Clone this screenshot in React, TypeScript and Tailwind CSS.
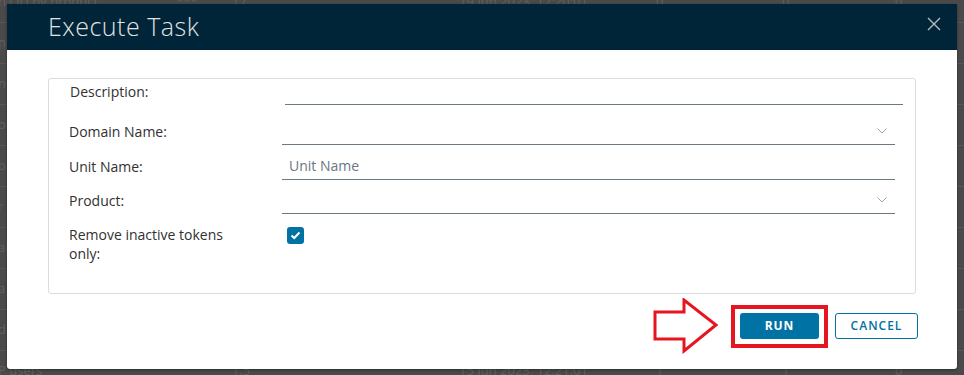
import React from "react";

function Backdrop() {
  const mids = ["n", "n", "of", "o", "r", "ai", "a", "d"];
  const rows = Array.from({ length: 10 });
  return (
    <div className="absolute inset-0 bg-[#4a4a4a] overflow-hidden">
      <div className="flex flex-col -mt-[18px]">
        {rows.map((_, i) => {
          const first = i === 0;
          const last = i === rows.length - 1;
          let cells: string[];
          if (first) cells = ["n OU by product", "***", "17", "19 Jun 2023, 12:20:01", "0", "0", "0"];
          else if (last) cells = ["P users", "", "1.5", "15 Jun 2023, 12:21:01", "1", "1", "0"];
          else cells = [mids[i - 1], "", "", "", "", "", ""];
          return (
            <div
              key={i}
              className="h-[41px] border-b border-[#575757] flex items-center text-[13px] text-[#606060] whitespace-nowrap"
            >
              <span className="w-[178px] -ml-[2px] pl-0">{cells[0]}</span>
              <span className="w-[56px]">{cells[1]}</span>
              <span className="w-[227px]">{cells[2]}</span>
              <span className="w-[197px]">{cells[3]}</span>
              <span className="w-[126px]">{cells[4]}</span>
              <span className="w-[113px]">{cells[5]}</span>
              <span>{cells[6]}</span>
            </div>
          );
        })}
      </div>
    </div>
  );
}

function Chevron() {
  return (
    <svg width="10" height="6" viewBox="0 0 10 6" fill="none">
      <path d="M0.5 0.5 L5 5 L9.5 0.5" stroke="#a3a3a3" strokeWidth="1" />
    </svg>
  );
}

function Row({
  label,
  h,
  children,
}: {
  label: string;
  h: string;
  children?: React.ReactNode;
}) {
  return (
    <div className="flex items-end">
      <div className="w-[233px] shrink-0 pl-[20px] pb-[3px] leading-[20px] text-[14px] font-medium text-[#313131]">
        {label}
      </div>
      <div className={`flex-1 ${h} border-b border-[#6b7a82] flex items-end justify-between pr-[8px]`}>
        {children}
      </div>
    </div>
  );
}

export default function App() {
  return (
    <div className="relative w-[964px] h-[375px] overflow-hidden font-['Open_Sans',sans-serif]">
      <Backdrop />
      <div className="absolute left-[7px] top-[4px] w-[950px] h-[365px] bg-white rounded-b-[3px] shadow-[0_1px_3px_rgba(0,0,0,0.4)] flex flex-col">
        <div className="h-[46px] bg-[#002538] flex items-center justify-between pl-[41px] pr-[16px]">
          <span className="text-[25px] text-[#e2e2e2] font-light tracking-[0.5px]">Execute Task</span>
          <svg width="14" height="14" viewBox="0 0 14 14" className="mb-[6px]">
            <path d="M1 1 L13 13 M13 1 L1 13" stroke="#b5bcc0" strokeWidth="1.4" />
          </svg>
        </div>
        <div className="flex-1 flex flex-col pl-[41px] pr-[41px] pt-[28px]">
          <div className="h-[216px] border border-[#dcdcdc] rounded-[3px] pr-[20px] flex flex-col">
            <div className="flex items-end">
              <div className="w-[236px] shrink-0 pl-[21px] pb-[3px] leading-[20px] text-[14px] font-medium text-[#313131]">
                Description:
              </div>
              <div className="flex-1 h-[26px] border-b border-[#6b7a82] -mr-[8px]" />
            </div>
            <Row label="Domain Name:" h="h-[40px]">
              <span />
              <span className="pb-[10px]">
                <Chevron />
              </span>
            </Row>
            <Row label="Unit Name:" h="h-[35px]">
              <span className="pl-[7px] pb-[3px] leading-[20px] text-[14px] text-[#6b7780]">Unit Name</span>
            </Row>
            <Row label="Product:" h="h-[34px]">
              <span />
              <span className="pb-[10px]">
                <Chevron />
              </span>
            </Row>
            <div className="flex items-start pt-[12px]">
              <div className="w-[233px] shrink-0 pl-[20px] pr-[30px] leading-[19px] text-[14px] font-medium text-[#313131] mt-[-1px]">
                Remove inactive tokens only:
              </div>
              <div className="ml-[5px] mt-[1px] w-[17px] h-[17px] rounded-[3px] bg-[#0072a3] flex items-center justify-center">
                <svg width="11" height="9" viewBox="0 0 11 9">
                  <path d="M1.5 4.5 L4.2 7 L9.5 1.5" stroke="#fff" strokeWidth="2" fill="none" />
                </svg>
              </div>
            </div>
          </div>
          <div className="flex justify-end items-center mt-[4px]">
            <div className="flex items-center mr-[12px]">
              <svg width="66" height="56" viewBox="0 0 66 56">
                <path
                  d="M2 14 L31 14 L31 2 L63 27 L31 53 L31 41 L2 41 Z"
                  fill="#fff"
                  stroke="#e5161f"
                  strokeWidth="3"
                  strokeLinejoin="miter"
                />
              </svg>
            </div>
            <div className="w-[97px] h-[43px] border-[4px] border-[#e5161f] flex items-center justify-center">
              <button className="w-[79px] h-[26px] bg-[#0072a3] rounded-[3px] text-white text-[12px] font-bold tracking-[1px]">
                RUN
              </button>
            </div>
            <button className="ml-[7px] w-[83px] h-[26px] border border-[#0072a3] rounded-[3px] text-[#0072a3] text-[12px] font-semibold tracking-[1px] -mr-[2px]">
              CANCEL
            </button>
          </div>
        </div>
      </div>
    </div>
  );
}
